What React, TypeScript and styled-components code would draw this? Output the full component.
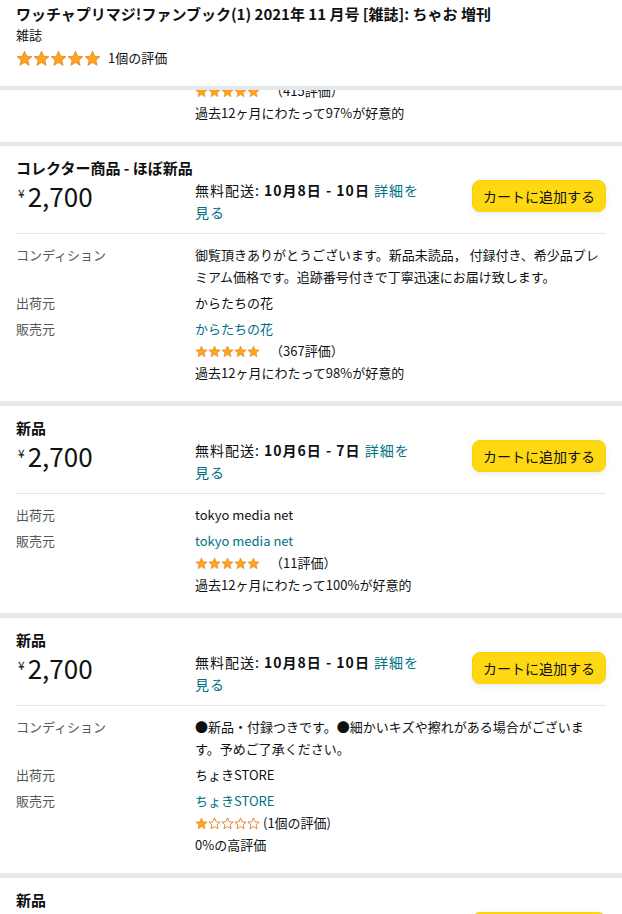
import { Fragment } from "react";
import styled, { createGlobalStyle } from "styled-components";

const GlobalStyle = createGlobalStyle`
  html, body {
    margin: 0;
    padding: 0;
    background: #ffffff;
    overflow: hidden;
  }
  body {
    font-family: "Noto Sans CJK JP", "Noto Sans", sans-serif;
    color: #0f1111;
  }
`;

const Page = styled.div`
  width: 622px;
`;

const Header = styled.header`
  height: 82px;
  padding: 4px 16px 0;
  border-bottom: 4px solid #e3e9e9;
`;

const Title = styled.h1`
  margin: 0;
  font-size: 15px;
  font-weight: 700;
  line-height: 20px;
  white-space: nowrap;
`;

const Format = styled.div`
  font-size: 13px;
  line-height: 21px;
  margin-bottom: 2px;
`;

const RatingRow = styled.div<{ $gap: number }>`
  display: flex;
  align-items: center;
  gap: ${(p) => p.$gap}px;
  font-size: 13px;
  line-height: 22px;
`;

const Stars = styled.span`
  display: inline-flex;
`;

const Tail = styled.div`
  height: 34px;
  overflow: hidden;
  display: flex;
  flex-direction: column;
  justify-content: flex-end;
  padding: 0 16px 18px 195px;
  border-bottom: 4px solid #e3e9e9;
  font-size: 13px;
  line-height: 22px;
`;

const Offer = styled.section`
  padding: 12px 16px 17px;
  border-bottom: 5px solid #e3e9e9;
`;

const OfferTitle = styled.h2`
  margin: 0 0 2px;
  font-size: 15px;
  font-weight: 700;
  line-height: 20px;
`;

const PriceRow = styled.div`
  display: grid;
  grid-template-columns: 179px 1fr auto;
  align-items: start;
`;

const Price = styled.div`
  display: flex;
  align-items: flex-start;
  font-size: 26px;
  line-height: 32px;
  padding-left: 2px;
`;

const Yen = styled.span`
  font-size: 12px;
  line-height: 12px;
  margin: 7px 3px 0 0;
`;

const Delivery = styled.div`
  width: 236px;
  font-size: 14px;
  line-height: 22px;
  letter-spacing: 1px;
  margin-top: -1px;

  b {
    font-weight: 700;
  }
`;

const Link = styled.a`
  color: #007185;
  text-decoration: none;
`;

const NoBreak = styled.span`
  white-space: nowrap;
`;

const CartButton = styled.button`
  width: 134px;
  height: 32px;
  padding: 0 10px;
  border: 1px solid #fcd200;
  border-radius: 8px;
  background: #ffd814;
  box-shadow: 0 2px 5px 0 rgba(213, 217, 217, 0.5);
  font-family: inherit;
  font-size: 14px;
  color: #0f1111;
  white-space: nowrap;
`;

const Divider = styled.hr`
  margin: 10px 0 10px;
  border: 0;
  border-top: 1px solid #e3e6e6;
`;

const Details = styled.dl`
  display: grid;
  grid-template-columns: 179px 1fr;
  row-gap: 4px;
  margin: 0;
  font-size: 13px;
  line-height: 22px;
`;

const Label = styled.dt`
  color: #565959;
`;

const Value = styled.dd`
  margin: 0;
`;

function Star({ size, filled }: { size: number; filled: boolean }) {
  return (
    <svg width={size} height={size} viewBox="0 0 24 24">
      <path
        d="M12 1.8l3 7 7.4.6-5.6 4.9 1.7 7.3L12 17.7l-6.5 3.9 1.7-7.3L1.6 9.4 9 8.8z"
        fill={filled ? "#ffa41c" : "#ffffff"}
        stroke="#de7921"
        strokeWidth={filled ? 1 : 1.6}
        strokeLinejoin="round"
      />
    </svg>
  );
}

function StarRating({ size, value }: { size: number; value: number }) {
  return (
    <Stars>
      {[0, 1, 2, 3, 4].map((i) => (
        <Star key={i} size={size} filled={i < value} />
      ))}
    </Stars>
  );
}

type OfferData = {
  title: string;
  from: string;
  to: string;
  condition?: string;
  shipper: string;
  seller: string;
  stars: number;
  count: string;
  positive: string;
};

const offers: OfferData[] = [
  {
    title: "コレクター商品 - ほぼ新品",
    from: "10月8日",
    to: "10日",
    condition:
      "御覧頂きありがとうございます。新品未読品， 付録付き、希少品プレミアム価格です。追跡番号付きで丁寧迅速にお届け致します。",
    shipper: "からたちの花",
    seller: "からたちの花",
    stars: 5,
    count: "（367評価）",
    positive: "過去12ヶ月にわたって98%が好意的",
  },
  {
    title: "新品",
    from: "10月6日",
    to: "7日",
    shipper: "tokyo media net",
    seller: "tokyo media net",
    stars: 5,
    count: "（11評価）",
    positive: "過去12ヶ月にわたって100%が好意的",
  },
  {
    title: "新品",
    from: "10月8日",
    to: "10日",
    condition: "●新品・付録つきです。●細かいキズや擦れがある場合がございます。予めご了承ください。",
    shipper: "ちょきSTORE",
    seller: "ちょきSTORE",
    stars: 1,
    count: "(1個の評価)",
    positive: "0%の高評価",
  },
  {
    title: "新品",
    from: "10月8日",
    to: "10日",
    shipper: "",
    seller: "",
    stars: 5,
    count: "",
    positive: "",
  },
];

export default function App() {
  return (
    <Page>
      <GlobalStyle />
      <Header>
        <Title>ワッチャプリマジ!ファンブック(1) 2021年 11 月号 [雑誌]: ちゃお 増刊</Title>
        <Format>雑誌</Format>
        <RatingRow $gap={7}>
          <StarRating size={17} value={5} />
          <span>1個の評価</span>
        </RatingRow>
      </Header>

      <Tail>
        <RatingRow $gap={10}>
          <StarRating size={13} value={5} />
          <span>（415評価）</span>
        </RatingRow>
        <div>過去12ヶ月にわたって97%が好意的</div>
      </Tail>

      {offers.map((o, i) => (
        <Offer key={i}>
          <OfferTitle>{o.title}</OfferTitle>
          <PriceRow>
            <Price>
              <Yen>¥</Yen>2,700
            </Price>
            <Delivery>
              無料配送: <b>{o.from} - {o.to}</b>{" "}
              <Link href="#">
                詳細を<NoBreak>見る</NoBreak>
              </Link>
            </Delivery>
            <CartButton>カートに追加する</CartButton>
          </PriceRow>
          <Divider />
          <Details>
            {o.condition && (
              <Fragment>
                <Label>コンディション</Label>
                <Value>{o.condition}</Value>
              </Fragment>
            )}
            <Label>出荷元</Label>
            <Value>{o.shipper}</Value>
            <Label>販売元</Label>
            <Value>
              <Link href="#">{o.seller}</Link>
              <RatingRow $gap={o.stars === 5 ? 10 : 3}>
                <StarRating size={13} value={o.stars} />
                <span>{o.count}</span>
              </RatingRow>
              <div>{o.positive}</div>
            </Value>
          </Details>
        </Offer>
      ))}
    </Page>
  );
}
